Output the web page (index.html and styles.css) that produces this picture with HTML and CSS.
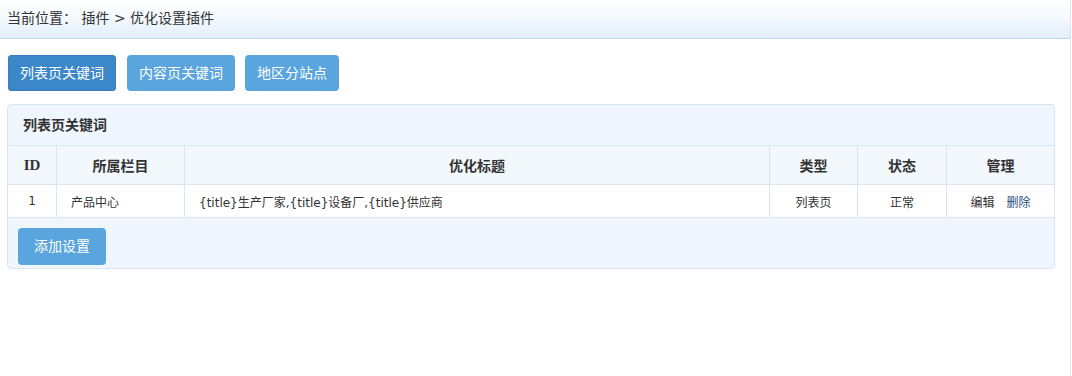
FILE: index.html
```html
<!DOCTYPE html>
<html lang="zh-CN">
<head>
  <meta charset="UTF-8" />
  <title>优化设置插件</title>
  <link rel="stylesheet" href="styles.css">
</head>
<body>
  <div class="page">
    <div class="crumbs">当前位置： 插件 &gt; 优化设置插件</div>

    <div class="main">
      <div class="tabs">
        <a class="btn active">列表页关键词</a>
        <a class="btn">内容页关键词</a>
        <a class="btn">地区分站点</a>
      </div>

      <div class="panel">
        <div class="panel-head">列表页关键词</div>
        <table>
          <thead>
            <tr>
              <th class="c-id">ID</th>
              <th class="c-cat">所属栏目</th>
              <th class="c-title">优化标题</th>
              <th class="c-type">类型</th>
              <th class="c-state">状态</th>
              <th class="c-op">管理</th>
            </tr>
          </thead>
          <tbody>
            <tr>
              <td>1</td>
              <td class="left">产品中心</td>
              <td class="left">{title}生产厂家,{title}设备厂,{title}供应商</td>
              <td>列表页</td>
              <td>正常</td>
              <td><a class="op">编辑</a><a class="op del">删除</a></td>
            </tr>
          </tbody>
        </table>
        <div class="panel-foot">
          <a class="btn add">添加设置</a>
        </div>
      </div>
    </div>
  </div>
</body>
</html>
```

FILE: styles.css
```css
html, body {
  margin: 0;
  padding: 0;
  background: #fff;
}
body {
  font-family: "DejaVu Sans", "Noto Sans CJK SC", sans-serif;
  color: #333;
}
.page {
  width: 1071px;
  height: 376px;
  border-right: 1px solid #e4e4e4;
  box-sizing: border-box;
}
.crumbs {
  height: 38px;
  line-height: 36px;
  padding-left: 7px;
  font-size: 14px;
  color: #333;
  background: linear-gradient(to bottom, #ffffff 0%, #f6fafe 40%, #e1eefa 100%);
  border-bottom: 1px solid #bcdaf3;
}
.main {
  padding: 16px 15px 0 7px;
}
.tabs {
  display: flex;
  gap: 10px;
  padding-left: 1px;
  margin-bottom: 13px;
}
.btn {
  display: inline-block;
  height: 36px;
  line-height: 36px;
  padding: 0 12px;
  font-size: 14px;
  color: #fff;
  background: #5aa5dd;
  border-radius: 4px;
  cursor: pointer;
}
.btn.active {
  background: #3c87c7;
  box-shadow: inset 0 0 0 1px #3a7fbd;
}
.tabs .btn:nth-child(2) {
  margin-left: 1px;
}
.panel {
  border: 1px solid #d9e6f2;
  border-radius: 4px;
  background: #eff6fd;
  overflow: hidden;
}
.panel-head {
  height: 40px;
  line-height: 40px;
  padding-left: 15px;
  font-size: 14px;
  font-weight: bold;
  color: #333;
  border-bottom: 1px solid #d9e6f2;
}
table {
  width: 100%;
  border-collapse: collapse;
  border-style: hidden;
  table-layout: fixed;
}
th, td {
  border: 1px solid #d9e6f2;
  text-align: center;
}
th {
  height: 38px;
  padding: 0;
  font-family: "Liberation Serif", "Noto Sans CJK SC", serif;
  font-size: 14px;
  font-weight: bold;
  color: #333;
  background: #f3f8fd;
}
th.c-id {
  font-size: 15px;
}
td {
  height: 32px;
  padding: 0 14px;
  font-size: 12px;
  color: #333;
  background: #fff;
}
td.left {
  text-align: left;
}
.c-id { width: 48px; }
.c-cat { width: 127px; }
.c-title { width: 584px; }
.c-type { width: 87px; }
.c-state { width: 88px; }
.panel-foot {
  border-top: 1px solid #d9e6f2;
  padding: 10px 10px 3px;
  height: 37px;
}
.btn.add {
  height: 37px;
  line-height: 37px;
  padding: 0 16px;
}
.op {
  color: #333;
  cursor: pointer;
}
.op.del {
  margin-left: 12px;
  color: #2c4c80;
}
```
